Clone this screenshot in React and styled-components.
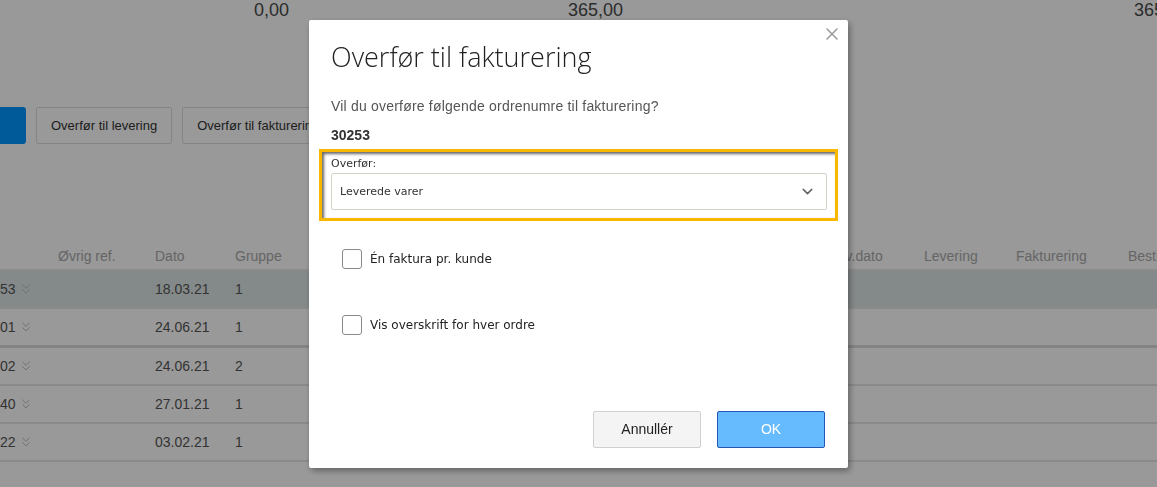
import styled, { createGlobalStyle } from "styled-components";
import { ChevronsDown, ChevronDown, X } from "lucide-react";

const GlobalStyle = createGlobalStyle`
  html, body {
    margin: 0;
    padding: 0;
    background: #fff;
    overflow: hidden;
  }
  body {
    font-family: "Liberation Sans", Arial, sans-serif;
    color: #444;
  }
`;

const Page = styled.div`
  width: 1157px;
  height: 487px;
  overflow: hidden;
  background: #fff;
`;

const Totals = styled.div`
  display: grid;
  grid-template-columns: 289px 334px 566px;
  height: 21px;
  font-size: 18px;
  line-height: 20px;
  color: #4a4a4a;
`;

const Total = styled.div`
  text-align: right;
  white-space: nowrap;
`;

const Actions = styled.div`
  display: flex;
  gap: 10px;
  margin-top: 86px;
  height: 37px;
`;

const PrimaryButton = styled.div`
  width: 26px;
  background: #0094ff;
  border-radius: 0 3px 3px 0;
`;

const Button = styled.div`
  display: flex;
  align-items: center;
  padding: 0 14px;
  border: 1px solid #ddd;
  border-radius: 2px;
  background: #fff;
  font-size: 13px;
  color: #333;
  white-space: nowrap;
`;

const Table = styled.div`
  margin-top: 99px;
`;

const cols = "58px 97px 80px 595px 94px 92px 112px 60px";

const HeadRow = styled.div`
  display: grid;
  grid-template-columns: ${cols};
  height: 26px;
  align-items: center;
  font-size: 14px;
  color: #a9a9a9;
  border-bottom: 2px solid #e8e8e8;
  white-space: nowrap;
`;

const Row = styled.div`
  display: grid;
  grid-template-columns: ${cols};
  height: 36px;
  align-items: center;
  font-size: 14px;
  color: #555;
  background: ${({ $selected }) => ($selected ? "#dde5e5" : "#fff")};
  border-bottom: ${({ $thick }) => ($thick ? "3px solid #dcdcdc" : "2px solid #e6e6e6")};
  white-space: nowrap;
`;

const Cell = styled.div`
  display: flex;
  align-items: center;
  overflow: hidden;
`;

const Order = styled(Cell)`
  gap: 2px;
  svg {
    color: #bdbdbd;
  }
`;

const Overlay = styled.div`
  position: fixed;
  inset: 0;
  background: rgba(0, 0, 0, 0.4);
  display: flex;
  align-items: center;
  justify-content: center;
`;

const Modal = styled.div`
  position: relative;
  width: 539px;
  height: 448px;
  box-sizing: border-box;
  background: #fff;
  border-radius: 2px;
  box-shadow: 2px 3px 6px rgba(0, 0, 0, 0.35);
  padding: 19px 22px 20px 22px;
  display: flex;
  flex-direction: column;
`;

const Close = styled.div`
  position: absolute;
  top: 4px;
  right: 6px;
  color: #9a9a9a;
  display: flex;
`;

const Title = styled.h2`
  margin: 0;
  font-family: "Open Sans", sans-serif;
  font-weight: 300;
  font-size: 27px;
  line-height: 36px;
  color: #222;
`;

const Question = styled.p`
  margin: 22px 0 0;
  font-size: 14px;
  letter-spacing: 0.2px;
  line-height: 18px;
  color: #555;
`;

const OrderNo = styled.p`
  margin: 12px 0 0;
  font-size: 14px;
  font-weight: 700;
  color: #333;
`;

const Highlight = styled.div`
  margin: 6px -12px 0 -12px;
  border: 3px solid #f8b800;
  box-shadow: inset 2px 2px 3px rgba(0, 0, 0, 0.6);
  padding: 5px 8px 8px 9px;
`;

const Label = styled.div`
  font-family: "DejaVu Sans", Verdana, sans-serif;
  font-size: 11px;
  line-height: 14px;
  color: #333;
  margin-bottom: 2px;
`;

const Select = styled.div`
  height: 35px;
  border: 1px solid #d4d4c8;
  border-radius: 2px;
  display: flex;
  align-items: center;
  justify-content: space-between;
  padding: 0 10px 0 8px;
  font-family: "DejaVu Sans", Verdana, sans-serif;
  font-size: 11px;
  color: #333;
  svg {
    color: #666;
  }
`;

const Options = styled.div`
  display: flex;
  flex-direction: column;
  gap: 46px;
  margin-top: 28px;
  padding-left: 11px;
`;

const Check = styled.label`
  display: flex;
  align-items: center;
  gap: 8px;
  font-family: "DejaVu Sans", Verdana, sans-serif;
  font-size: 12px;
  color: #222;
`;

const Box = styled.span`
  width: 18px;
  height: 18px;
  border: 1px solid #8a8a8a;
  border-radius: 3px;
  background: #fff;
`;

const Footer = styled.div`
  margin-top: auto;
  display: flex;
  justify-content: flex-end;
  gap: 16px;
  padding-right: 1px;
`;

const DialogButton = styled.button`
  width: 108px;
  height: 37px;
  border-radius: 2px;
  font-family: "Liberation Sans", Arial, sans-serif;
  font-size: 14px;
  border: 1px solid ${({ $primary }) => ($primary ? "#2757b5" : "#d0d0d0")};
  background: ${({ $primary }) => ($primary ? "#66bbff" : "#f4f4f4")};
  color: ${({ $primary }) => ($primary ? "#fff" : "#222")};
`;

const rows = [
  { no: "53", date: "18.03.21", group: "1", selected: true },
  { no: "01", date: "24.06.21", group: "1", thick: true },
  { no: "02", date: "24.06.21", group: "2" },
  { no: "40", date: "27.01.21", group: "1" },
  { no: "22", date: "03.02.21", group: "1" },
];

const App = () => {
  return (
    <>
      <GlobalStyle />
      <Page>
        <Totals>
          <Total>0,00</Total>
          <Total>365,00</Total>
          <Total>365,00</Total>
        </Totals>

        <Actions>
          <PrimaryButton />
          <Button>Overfør til levering</Button>
          <Button>Overfør til fakturering</Button>
        </Actions>

        <Table>
          <HeadRow>
            <Cell />
            <Cell>Øvrig ref.</Cell>
            <Cell>Dato</Cell>
            <Cell>Gruppe</Cell>
            <Cell>Lev.dato</Cell>
            <Cell>Levering</Cell>
            <Cell>Fakturering</Cell>
            <Cell>Bestilling</Cell>
          </HeadRow>
          {rows.map((row, index) => (
            <Row key={index} $selected={row.selected} $thick={row.thick}>
              <Order>
                {row.no}
                <ChevronsDown size={16} strokeWidth={1.5} />
              </Order>
              <Cell />
              <Cell>{row.date}</Cell>
              <Cell>{row.group}</Cell>
            </Row>
          ))}
        </Table>
      </Page>

      <Overlay>
        <Modal>
          <Close>
            <X size={20} strokeWidth={1.8} />
          </Close>
          <Title>Overfør til fakturering</Title>
          <Question>Vil du overføre følgende ordrenumre til fakturering?</Question>
          <OrderNo>30253</OrderNo>

          <Highlight>
            <Label>Overfør:</Label>
            <Select>
              Leverede varer
              <ChevronDown size={17} strokeWidth={2.2} />
            </Select>
          </Highlight>

          <Options>
            <Check>
              <Box />
              Én faktura pr. kunde
            </Check>
            <Check>
              <Box />
              Vis overskrift for hver ordre
            </Check>
          </Options>

          <Footer>
            <DialogButton>Annullér</DialogButton>
            <DialogButton $primary>OK</DialogButton>
          </Footer>
        </Modal>
      </Overlay>
    </>
  );
};

export default App;
